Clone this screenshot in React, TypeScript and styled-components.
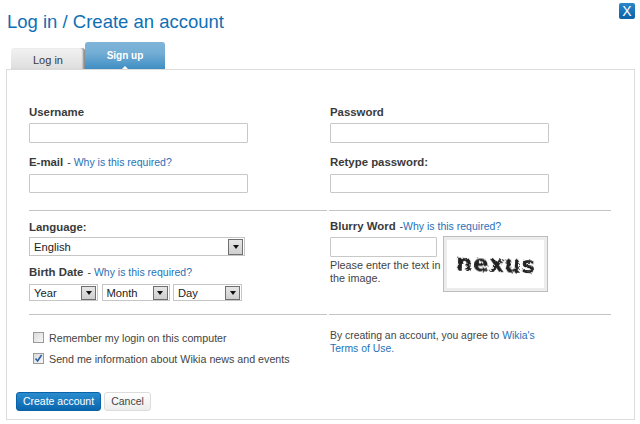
import styled, { createGlobalStyle } from "styled-components";

const Global = createGlobalStyle`
  html, body { margin: 0; padding: 0; background: #fff; }
  body { font-family: "Liberation Sans", Arial, sans-serif; color: #3a3a3a; }
  * { box-sizing: border-box; }
`;

const Page = styled.div`
  width: 640px;
  height: 424px;
  padding: 3px 5px 4px 6px;
  display: flex;
  flex-direction: column;
  overflow: hidden;
`;

const Header = styled.div`
  display: flex;
  justify-content: space-between;
  align-items: flex-start;
  height: 39px;
`;

const Title = styled.h1`
  margin: 6px 0 0 1px;
  font-size: 18.5px;
  line-height: 26px;
  font-weight: 400;
  color: #0f6fb5;
`;

const Close = styled.button`
  width: 16px;
  height: 16px;
  padding: 0;
  border: 0;
  border-radius: 2px;
  background: linear-gradient(#2a87c9, #0a62a8);
  color: #fff;
  font: 400 14px/16px "Liberation Sans", Arial, sans-serif;
  text-align: center;
`;

const Tabs = styled.div`
  display: flex;
  align-items: flex-end;
  height: 27px;
  padding-left: 5px;
`;

const Tab = styled.div<{ $active?: boolean }>`
  position: relative;
  width: ${(p) => (p.$active ? "80px" : "74px")};
  height: ${(p) => (p.$active ? "27px" : "21px")};
  border-radius: 3px 3px 0 0;
  text-align: center;
  font-size: ${(p) => (p.$active ? "10px" : "11px")};
  color: ${(p) => (p.$active ? "#fff" : "#3a3a3a")};
  font-weight: ${(p) => (p.$active ? 700 : 400)};
  line-height: ${(p) => (p.$active ? "28px" : "25px")};
  background: ${(p) =>
    p.$active
      ? "linear-gradient(#7fb4d8 0%, #74aed5 40%, #3f8ec4 100%)"
      : "linear-gradient(#f2f2f2, #dedede)"};
  ${(p) =>
    p.$active
      ? `&::after {
          content: "";
          position: absolute;
          left: 50%;
          bottom: 0;
          margin-left: -3px;
          border: 3px solid transparent;
          border-top: 0;
          border-bottom-color: #fff;
        }`
      : "box-shadow: inset -3px 0 2px -1px #8b8b8b;"}
`;

const Panel = styled.div`
  flex: 1;
  border: 1.5px solid #dcdcdc;
  padding: 0 0 8px 9px;
  display: flex;
  flex-direction: column;
`;

const Grid = styled.div`
  flex: 1;
  display: grid;
  grid-template-columns: 298px 282px;
  grid-template-rows: 141px 104px auto;
  column-gap: 2px;
  padding-left: 13px;
`;

const Section = styled.div<{ $top?: number; $line?: boolean; $inset?: boolean }>`
  padding-top: ${(p) => p.$top ?? 0}px;
  padding-left: ${(p) => (p.$inset ? 1 : 0)}px;
  border-bottom: ${(p) => (p.$line ? "1.5px solid #c4c4c4" : "0")};
`;

const LabelRow = styled.div<{ $gap?: number }>`
  display: flex;
  align-items: baseline;
  height: 15px;
  line-height: 15px;
  margin-bottom: ${(p) => p.$gap ?? 3}px;
`;

const Label = styled.label`
  font-size: 11.4px;
  font-weight: 700;
  color: #3a3a3a;
`;

const Dash = styled.span<{ $tight?: boolean }>`
  font-size: 10.5px;
  margin: 0 ${(p) => (p.$tight ? 0 : 3)}px 0 4px;
`;

const Link = styled.a`
  font-size: 10.5px;
  color: #1f72b8;
  text-decoration: none;
`;

const TextInput = styled.input<{ $width?: number }>`
  display: block;
  width: ${(p) => p.$width ?? 219}px;
  height: 19.5px;
  padding: 0;
  background: #fff;
  border: 1.5px solid #c8c8c8;
  border-radius: 1px;
  outline: 0;
`;

const Field = styled.div<{ $gap?: number }>`
  margin-bottom: ${(p) => p.$gap ?? 0}px;
`;

const SelectBox = styled.div<{ $width: number; $height: number }>`
  width: ${(p) => p.$width}px;
  height: ${(p) => p.$height}px;
  display: flex;
  align-items: center;
  justify-content: space-between;
  padding: 0 1px 0 4px;
  border: 1px solid #c6c6c6;
  font-size: 11.2px;
  color: #222;
  background: #fff;
`;

const Arrow = styled.span`
  width: 15px;
  height: calc(100% - 1px);
  display: flex;
  align-items: center;
  justify-content: center;
  background: linear-gradient(#e6e6e6, #cfcfcf);
  border: 1px solid #6f6f6f;
  &::before {
    content: "";
    border: 3px solid transparent;
    border-top: 4px solid #111;
    border-bottom: 0;
  }
`;

const DateRow = styled.div`
  display: flex;
  gap: 3.5px;
`;

const Checks = styled.div`
  display: flex;
  flex-direction: column;
  gap: 8px;
  padding: 16px 0 0 4px;
`;

const CheckRow = styled.div`
  display: flex;
  align-items: center;
  gap: 5px;
  height: 13px;
  font-size: 10.7px;
  color: #444;
`;

const Box = styled.span`
  width: 11px;
  height: 11px;
  display: flex;
  border: 1px solid #9a9a9a;
  background: linear-gradient(135deg, #dcdcdc, #f6f6f6);
`;

const CaptchaRow = styled.div`
  display: flex;
  gap: 6px;
`;

const CaptchaLeft = styled.div`
  width: 107px;
  padding-top: 1px;
`;

const Hint = styled.div`
  margin-top: 2px;
  font-size: 10.8px;
  line-height: 13.5px;
  white-space: nowrap;
  color: #444;
`;

const Captcha = styled.div`
  width: 105px;
  height: 56px;
  border: 1px solid #bdbdbd;
  outline: 3px solid #ececec;
  outline-offset: -4px;
  display: flex;
  align-items: center;
  justify-content: center;
  background: #fff;
`;

const CaptchaWord = styled.span`
  font: 700 23px/1 "DejaVu Sans", sans-serif;
  letter-spacing: 0.6px;
  color: #222;
  filter: url(#rough) blur(0.5px);
  transform: rotate(2deg);
`;

const Terms = styled.p`
  margin: 0;
  font-size: 10.4px;
  line-height: 13px;
  color: #444;
  ${Link} {
    font-size: inherit;
  }
`;

const Footer = styled.div`
  display: flex;
  gap: 3px;
`;

const Primary = styled.button`
  width: 85px;
  height: 19px;
  padding: 0;
  border: 1px solid #0a62a8;
  border-radius: 3px;
  background: linear-gradient(#2a8ccf, #0a66ad);
  color: #fff;
  font: 400 10.5px/17px "Liberation Sans", Arial, sans-serif;
`;

const Secondary = styled.button`
  width: 47px;
  height: 19px;
  padding: 0;
  border: 1px solid #dcdcdc;
  border-radius: 3px;
  background: linear-gradient(#fff, #ececec);
  color: #444;
  font: 400 10.5px/17px "Liberation Sans", Arial, sans-serif;
`;

const HiddenDefs = styled.svg`
  position: absolute;
  width: 0;
  height: 0;
`;

const Select = ({ value, width, height }: { value: string; width: number; height: number }) => (
  <SelectBox $width={width} $height={height}>
    {value}
    <Arrow />
  </SelectBox>
);

export default function App() {
  return (
    <Page>
      <Global />
      {/* jagged edges for the captcha word */}
      <HiddenDefs>
        <filter id="rough" x="-10%" y="-20%" width="120%" height="140%">
          <feTurbulence type="fractalNoise" baseFrequency="0.55" numOctaves="2" seed="4" />
          <feDisplacementMap in="SourceGraphic" scale="4" />
        </filter>
      </HiddenDefs>
      <Header>
        <Title>Log in / Create an account</Title>
        <Close>X</Close>
      </Header>
      <Tabs>
        <Tab>Log in</Tab>
        <Tab $active>Sign up</Tab>
      </Tabs>
      <Panel>
        <Grid>
          <Section $top={35} $line>
            <Field $gap={12}>
              <LabelRow>
                <Label>Username</Label>
              </LabelRow>
              <TextInput />
            </Field>
            <Field>
              <LabelRow $gap={4}>
                <Label>E-mail</Label>
                <Dash>-</Dash>
                <Link>Why is this required?</Link>
              </LabelRow>
              <TextInput />
            </Field>
          </Section>
          <Section $top={35} $line $inset>
            <Field $gap={12}>
              <LabelRow>
                <Label>Password</Label>
              </LabelRow>
              <TextInput />
            </Field>
            <Field>
              <LabelRow $gap={4}>
                <Label>Retype password:</Label>
              </LabelRow>
              <TextInput />
            </Field>
          </Section>
          <Section $top={9} $line>
            <Field $gap={9}>
              <LabelRow $gap={2}>
                <Label>Language:</Label>
              </LabelRow>
              <Select value="English" width={216} height={19} />
            </Field>
            <LabelRow $gap={4}>
              <Label>Birth Date</Label>
              <Dash>-</Dash>
              <Link>Why is this required?</Link>
            </LabelRow>
            <DateRow>
              <Select value="Year" width={69} height={17} />
              <Select value="Month" width={68} height={17} />
              <Select value="Day" width={69} height={17} />
            </DateRow>
          </Section>
          <Section $top={8} $line $inset>
            <LabelRow $gap={2}>
              <Label>Blurry Word</Label>
              <Dash $tight>-</Dash>
              <Link>Why is this required?</Link>
            </LabelRow>
            <CaptchaRow>
              <CaptchaLeft>
                <TextInput $width={107} />
                <Hint>
                  Please enter the text in
                  <br />
                  the image.
                </Hint>
              </CaptchaLeft>
              <Captcha>
                <CaptchaWord>nexus</CaptchaWord>
              </Captcha>
            </CaptchaRow>
          </Section>
          <Section>
            <Checks>
              <CheckRow>
                <Box />
                Remember my login on this computer
              </CheckRow>
              <CheckRow>
                <Box>
                  <svg width="9" height="9" viewBox="0 0 9 9">
                    <path d="M1.5 4.5 L3.6 7 L7.6 1" fill="none" stroke="#2a5fa8" strokeWidth="1.6" />
                  </svg>
                </Box>
                Send me information about Wikia news and events
              </CheckRow>
            </Checks>
          </Section>
          <Section $top={14} $inset>
            <Terms>
              By creating an account, you agree to <Link>Wikia's</Link>
              <br />
              <Link>Terms of Use.</Link>
            </Terms>
          </Section>
        </Grid>
        <Footer>
          <Primary>Create account</Primary>
          <Secondary>Cancel</Secondary>
        </Footer>
      </Panel>
    </Page>
  );
}
